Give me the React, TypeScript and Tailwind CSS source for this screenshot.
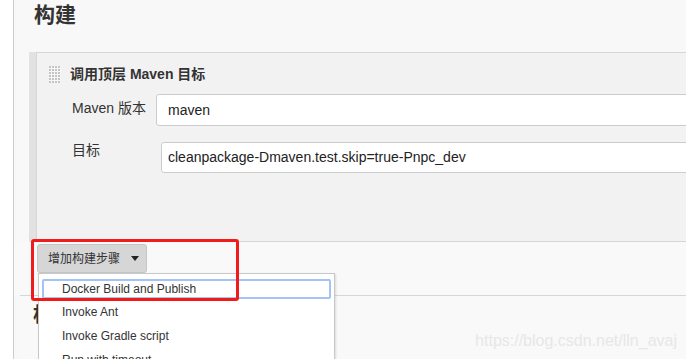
import React from "react";

function Handle() {
  const dots: React.ReactNode[] = [];
  for (let r = 0; r < 6; r++) {
    for (let c = 0; c < 4; c++) {
      dots.push(<rect key={`${r}-${c}`} x={c * 3} y={r * 3} width={2} height={2} fill="#c4c4c4" />);
    }
  }
  return (
    <svg width="12" height="17" viewBox="0 0 12 17" className="shrink-0">
      <rect x="0" y="0" width="12" height="17" fill="#f7f7f7" />
      {dots}
    </svg>
  );
}

export default function App() {
  const font = { fontFamily: '"Liberation Sans", Arial, "Noto Sans CJK SC", sans-serif' };
  return (
    <div
      className="relative flex h-[359px] w-[686px] overflow-hidden bg-white text-[#333333]"
      style={font}
    >
      <div className="w-[13px] shrink-0 bg-white" />
      <div className="flex min-w-0 flex-1 flex-col border-l border-[#cccccc] bg-[#f8f8f8]">
        {/* Title */}
        <div className="h-[52px] shrink-0 pl-[20px] pt-[1px]">
          <h2 className="text-[21px] font-bold leading-[28px] text-[#333333]">构建</h2>
        </div>

        {/* Section */}
        <div className="ml-[15px] flex h-[190px] shrink-0">
          <div className="w-[7px] shrink-0 bg-[#e2e2e2]" />
          <div className="flex min-w-0 flex-1 flex-col border-b border-l border-t border-[#d6d6d6] bg-[#f2f2f2]">
            <div className="mt-[13px] flex h-[17px] items-center gap-[9px] pl-[12px]">
              <Handle />
              <span className="whitespace-nowrap text-[14px] font-bold leading-[17px] text-[#333333]">
                调用顶层 Maven 目标
              </span>
            </div>
            <div className="mt-[11px] flex items-start pl-[35px]">
              <div className="w-[84px] shrink-0 whitespace-nowrap pt-[4px] text-[14px] leading-[20px] text-[#333333]">
                Maven 版本
              </div>
              <div className="-mr-[20px] flex h-[32px] flex-1 items-center rounded-[3px] border border-[#cccccc] bg-white pl-[11px] text-[14px] text-[#222222]">
                maven
              </div>
            </div>
            <div className="mt-[16px] flex items-start pl-[35px]">
              <div className="-mt-[2px] w-[89px] shrink-0 whitespace-nowrap text-[14px] leading-[20px] text-[#333333]">
                目标
              </div>
              <div className="-mr-[20px] flex h-[31px] flex-1 items-center rounded-[3px] border border-[#cccccc] bg-white pl-[6px] text-[14px] text-[#222222] whitespace-nowrap">
                cleanpackage-Dmaven.test.skip=true-Pnpc_dev
              </div>
            </div>
          </div>
        </div>

        {/* Add build step */}
        <div className="h-[53px] shrink-0 bg-[#f9f9f9] pl-[23px] pt-[2px]">
          <div className="flex h-[29px] w-[110px] items-center rounded-[3px] border border-[#c6c6c6] bg-[#d6d6d6] pl-[10px] text-[12px] text-[#333333]">
            <span className="whitespace-nowrap">增加构建步骤</span>
            <svg width="8" height="5" viewBox="0 0 8 5" className="ml-[11px]">
              <path d="M0 0 L8 0 L4 5 Z" fill="#222222" />
            </svg>
          </div>
        </div>

        {/* Post-build section */}
        <div className="ml-[6px] flex-1 border-t border-[#d6d6d6] bg-[#f9f9f9] pl-[13px] pt-[6px]">
          <h2 className="whitespace-nowrap text-[20px] font-bold leading-[26px] text-[#333333]">构建后操作</h2>
        </div>
      </div>

      {/* Dropdown menu */}
      <div className="absolute left-[38px] top-[273px] h-[100px] w-[297px] border border-[#c8c8c8] bg-white shadow-[1px_1px_2px_rgba(0,0,0,0.12)]">
        <div className="px-[3px] pt-[5px] text-[12px] text-[#333333]">
          <div className="flex h-[20px] items-center rounded-[2px] border-2 border-[#a3c3f6] pl-[18px] whitespace-nowrap">
            Docker Build and Publish
          </div>
          <div className="h-[1px]" />
          <div className="flex h-[24px] items-center pl-[20px] whitespace-nowrap">Invoke Ant</div>
          <div className="flex h-[24px] items-center pl-[20px] whitespace-nowrap">Invoke Gradle script</div>
          <div className="flex h-[24px] items-center pl-[20px] whitespace-nowrap">Run with timeout</div>
        </div>
      </div>

      {/* Red highlight rectangle */}
      <div className="pointer-events-none absolute left-[31px] top-[239px] h-[62px] w-[208px] rounded-[3px] border-[3px] border-[#f01c1c]" />

      {/* Watermark */}
      <div className="pointer-events-none absolute right-[9px] top-[331px] whitespace-nowrap text-[16px] leading-[20px] text-[#e7e7e7]">
        https://blog.csdn.net/lln_avaj
      </div>
    </div>
  );
}
